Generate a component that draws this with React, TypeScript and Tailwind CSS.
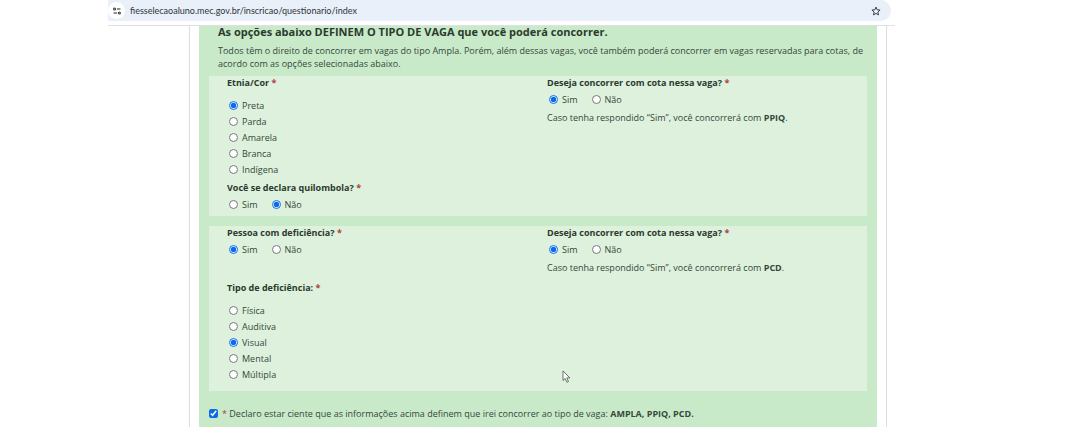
import { useState } from "react";

interface RadioGroupProps {
  name: string;
  legend: string;
  options: string[];
  initial: string;
  stacked?: boolean;
}

function Required() {
  return <span className="text-[#b0413e]">*</span>;
}

function RadioGroup({ name, legend, options, initial, stacked }: RadioGroupProps) {
  const [value, setValue] = useState(initial);

  return (
    <fieldset>
      <legend className="leading-[13px] font-bold text-[#2b3a2e]">
        {legend} <Required />
      </legend>
      <div className={stacked ? "flex flex-col pt-2" : "flex gap-3 pt-[2px]"}>
        {options.map((option) => (
          <label key={option} className="flex h-4 items-center gap-1 pl-[2px]">
            <input
              type="radio"
              name={name}
              value={option}
              checked={value === option}
              onChange={() => setValue(option)}
              className="m-0 size-[9px] shrink-0 accent-[#0b6ae6]"
            />
            {option}
          </label>
        ))}
      </div>
    </fieldset>
  );
}

function QuotaQuestion({ name, quota }: { name: string; quota: string }) {
  return (
    <div>
      <RadioGroup
        name={name}
        legend="Deseja concorrer com cota nessa vaga?"
        options={["Sim", "Não"]}
        initial="Sim"
      />
      <p className="pt-1">
        Caso tenha respondido “Sim”, você concorrerá com <strong>{quota}</strong>.
      </p>
    </div>
  );
}

function AddressBar() {
  return (
    <div className="border-b border-[#dfe1e3] pr-1 pb-1">
      <div className="flex h-[21px] items-center rounded-r-full bg-[#e9f0f9] pr-[10px]">
        <button
          type="button"
          aria-label="Informações do site"
          className="flex size-[17px] items-center justify-center rounded-full bg-white"
        >
          <svg viewBox="0 0 10 8" className="h-2 w-[10px]" fill="none" stroke="#45494d" strokeWidth="1.2">
            <circle cx="2.6" cy="2" r="1" />
            <path d="M5 2h3.4" />
            <path d="M1.6 6h3.4" />
            <circle cx="7.4" cy="6" r="1" />
          </svg>
        </button>
        <input
          type="text"
          aria-label="Endereço"
          defaultValue="fiesselecaoaluno.mec.gov.br/inscricao/questionario/index"
          className="min-w-0 flex-1 bg-transparent pl-[5px] font-['Lato',sans-serif] text-[9px] text-[#303438] outline-none"
        />
        <button type="button" aria-label="Adicionar aos favoritos">
          <svg viewBox="0 0 24 24" className="size-[10px]" fill="none" stroke="#3c4043" strokeWidth="2.4">
            <path d="M12 2.5l2.7 6.6 7.1.6-5.4 4.7 1.6 7-6-3.7-6 3.7 1.6-7-5.4-4.7 7.1-.6z" />
          </svg>
        </button>
      </div>
    </div>
  );
}

export default function App() {
  const [aware, setAware] = useState(true);

  return (
    <div className="bg-white pr-[183px] pl-[108px] font-['Open_Sans','Noto_Sans',sans-serif] text-[9px] leading-[13px] text-[#36473b]">
      <AddressBar />
      <main className="mr-2 ml-[81px] border-x border-[#dedede] px-[9px]">
        <form className="bg-[#c9eac9] px-[10px] pb-[7px]">
          <h1 className="px-[9px] pb-[6px] text-[11px] leading-[12px] font-bold text-[#2b3a2e]">
            As opções abaixo DEFINEM O TIPO DE VAGA que você poderá concorrer.
          </h1>
          <p className="pr-1 pb-[6px] pl-[9px] text-justify">
            Todos têm o direito de concorrer em vagas do tipo Ampla. Porém, além dessas vagas, você também
            poderá concorrer em vagas reservadas para cotas, de acordo com as opções selecionadas abaixo.
          </p>

          <section className="grid grid-cols-[320px_1fr] bg-[#ddf1dd] px-[18px] pb-1">
            <div className="flex flex-col gap-1">
              <RadioGroup
                name="etnia"
                legend="Etnia/Cor"
                options={["Preta", "Parda", "Amarela", "Branca", "Indígena"]}
                initial="Preta"
                stacked
              />
              <RadioGroup
                name="quilombola"
                legend="Você se declara quilombola?"
                options={["Sim", "Não"]}
                initial="Não"
              />
            </div>
            <QuotaQuestion name="cota-etnia" quota="PPIQ" />
          </section>

          <section className="relative mt-[10px] grid grid-cols-[320px_1fr] bg-[#ddf1dd] px-[18px] pb-[9px]">
            <div className="flex flex-col gap-6">
              <RadioGroup
                name="deficiencia"
                legend="Pessoa com deficiência?"
                options={["Sim", "Não"]}
                initial="Sim"
              />
              <RadioGroup
                name="tipo-deficiencia"
                legend="Tipo de deficiência:"
                options={["Física", "Auditiva", "Visual", "Mental", "Múltipla"]}
                initial="Visual"
                stacked
              />
            </div>
            <QuotaQuestion name="cota-deficiencia" quota="PCD" />
            <svg
              viewBox="0 0 9 13"
              aria-hidden="true"
              className="absolute bottom-2 left-[353px] h-[13px] w-[9px]"
              fill="#fff"
              stroke="#4a514c"
              strokeWidth="0.8"
            >
              <path d="M1 .9v9.6l2.2-2 1.7 3.7 1.6-.7-1.7-3.6h3.1z" />
            </svg>
          </section>

          <label className="flex items-center gap-1 pt-4">
            <input
              type="checkbox"
              checked={aware}
              onChange={(e) => setAware(e.target.checked)}
              className="m-0 size-[9px] shrink-0 accent-[#0b6ae6]"
            />
            <span>
              <Required /> Declaro estar ciente que as informações acima definem que irei concorrer ao tipo de
              vaga: <strong>AMPLA, PPIQ, PCD.</strong>
            </span>
          </label>
        </form>
      </main>
    </div>
  );
}
